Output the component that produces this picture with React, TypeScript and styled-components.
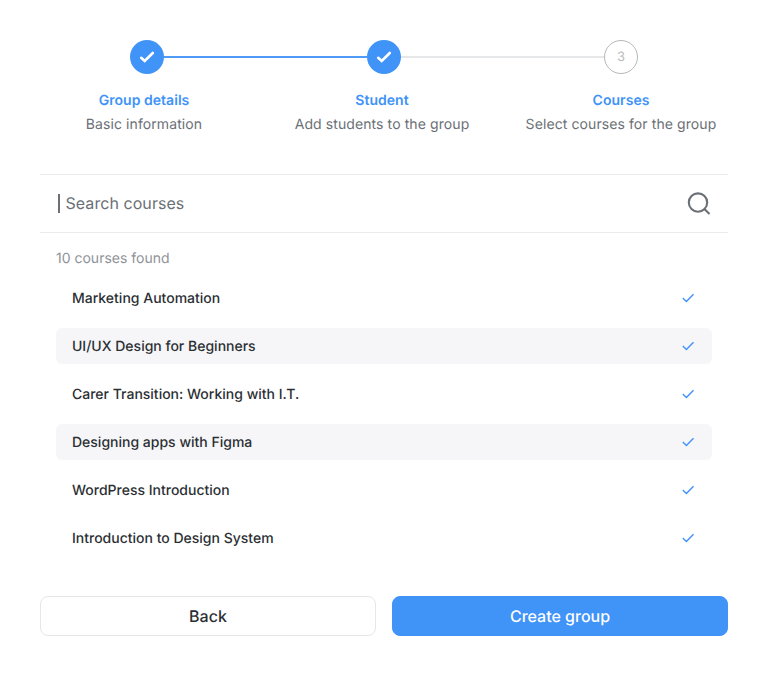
import React from "react";
import styled, { createGlobalStyle } from "styled-components";

const GlobalStyle = createGlobalStyle`
  * { box-sizing: border-box; }
  body {
    margin: 0;
    background: #fff;
    font-family: Inter, sans-serif;
    color: #2b2f33;
    text-rendering: geometricPrecision;
    -webkit-font-smoothing: antialiased;
  }
  button { font-family: inherit; text-rendering: inherit; }
`;

const Page = styled.main`
  width: 768px;
  height: 677px;
  padding: 40px 40px 0;
  display: flex;
  flex-direction: column;
`;

const Track = styled.div`
  display: flex;
  align-items: center;
  margin: 0 90px;
  height: 34px;
`;

const Marker = styled.span<{ $done?: boolean }>`
  flex: none;
  width: 34px;
  height: 34px;
  border-radius: 50%;
  display: grid;
  place-items: center;
  font-size: 13px;
  line-height: 17px;
  color: #b9bbbe;
  background: ${(p) => (p.$done ? "#4093f7" : "#fff")};
  border: ${(p) => (p.$done ? "none" : "1px solid #b5b7ba")};
`;

const Connector = styled.span<{ $done?: boolean }>`
  flex: 1;
  height: 2px;
  background: ${(p) => (p.$done ? "#4f9bf7" : "#e6e7e8")};
`;

const StepLabels = styled.div`
  display: grid;
  grid-template-columns: 238px 238px 1fr;
  margin: 15px -13px 0 -15px;
  height: 85px;
`;

const StepLabel = styled.div`
  text-align: center;
  white-space: nowrap;
  font-size: 14px;
  line-height: 24px;
`;

const StepName = styled.div`
  font-weight: 600;
  letter-spacing: 0.04px;
  color: #4093f7;
`;

const StepHint = styled.div`
  letter-spacing: 0.09px;
  color: #6b7076;
`;

const SearchBar = styled.div`
  display: flex;
  align-items: center;
  justify-content: space-between;
  height: 59px;
  padding: 0 16px 0 18px;
  border-top: 1px solid #e9eaec;
  border-bottom: 1px solid #e9eaec;
  font-size: 16px;
  letter-spacing: 0.06px;
  color: #6b7076;
`;

const Query = styled.span`
  display: flex;
  align-items: center;
  gap: 6px;
  line-height: 20px;
  padding-bottom: 1px;
`;

const Caret = styled.span`
  width: 1.5px;
  height: 19px;
  background: #6b7076;
`;

const Count = styled.div`
  margin: 14px 16px 9px;
  font-size: 14px;
  line-height: 24px;
  color: #8f9398;
`;

const List = styled.ul`
  list-style: none;
  margin: 0 16px;
  padding: 0;
  display: flex;
  flex-direction: column;
  gap: 12px;
`;

const Course = styled.li<{ $shaded?: boolean }>`
  display: flex;
  align-items: center;
  justify-content: space-between;
  height: 36px;
  padding: 0 16px;
  border-radius: 6px;
  font-size: 14px;
  font-weight: 500;
  line-height: 20px;
  background: ${(p) => (p.$shaded ? "#f6f6f8" : "transparent")};
`;

const CourseTitle = styled.span`
  padding-top: 2px;
`;

const Actions = styled.div`
  display: grid;
  grid-template-columns: 1fr 1fr;
  gap: 16px;
  margin-top: 40px;
`;

const Button = styled.button<{ $primary?: boolean }>`
  height: 40px;
  padding: 0;
  border-radius: 8px;
  font-size: 16px;
  font-weight: 500;
  border: 1px solid ${(p) => (p.$primary ? "#4093f7" : "#e6e7e9")};
  background: ${(p) => (p.$primary ? "#4093f7" : "#fff")};
  color: ${(p) => (p.$primary ? "#fff" : "#2b2f33")};
`;

const StepCheck = () => (
  <svg width="18" height="18" viewBox="0 0 18 18" fill="none" stroke="#fff" strokeWidth="2.6" strokeLinecap="round">
    <path d="M3.2 9.8 6.7 13 14.8 5" />
  </svg>
);

const CourseCheck = () => (
  <svg width="16" height="16" viewBox="0 0 16 16" fill="none" stroke="#4093f7" strokeWidth="1.4">
    <path d="M2.8 8 6.4 11.4 13.5 4.2" />
  </svg>
);

const SearchIcon = () => (
  <svg width="26" height="26" viewBox="0 0 26 26" fill="none" stroke="#6b7076" strokeWidth="2.1">
    <circle cx="12" cy="11.6" r="9.2" />
    <path d="m18.4 18 5.1 5" />
  </svg>
);

const steps = [
  { name: "Group details", hint: "Basic information" },
  { name: "Student", hint: "Add students to the group" },
  { name: "Courses", hint: "Select courses for the group" },
];

const courses = [
  { title: "Marketing Automation" },
  { title: "UI/UX Design for Beginners", shaded: true },
  { title: "Carer Transition: Working with I.T." },
  { title: "Designing apps with Figma", shaded: true },
  { title: "WordPress Introduction" },
  { title: "Introduction to Design System" },
];

export default function App() {
  return (
    <Page>
      <GlobalStyle />
      <Track>
        <Marker $done><StepCheck /></Marker>
        <Connector $done />
        <Marker $done><StepCheck /></Marker>
        <Connector />
        <Marker>3</Marker>
      </Track>
      <StepLabels>
        {steps.map((s) => (
          <StepLabel key={s.name}>
            <StepName>{s.name}</StepName>
            <StepHint>{s.hint}</StepHint>
          </StepLabel>
        ))}
      </StepLabels>
      <SearchBar>
        <Query><Caret />Search courses</Query>
        <SearchIcon />
      </SearchBar>
      <Count>10 courses found</Count>
      <List>
        {courses.map((c) => (
          <Course key={c.title} $shaded={c.shaded}>
            <CourseTitle>{c.title}</CourseTitle>
            <CourseCheck />
          </Course>
        ))}
      </List>
      <Actions>
        <Button type="button">Back</Button>
        <Button type="button" $primary>Create group</Button>
      </Actions>
    </Page>
  );
}
